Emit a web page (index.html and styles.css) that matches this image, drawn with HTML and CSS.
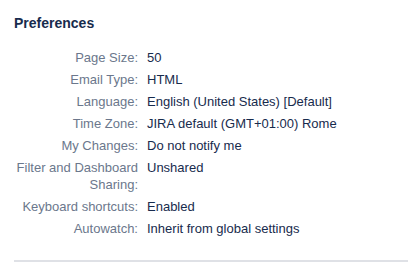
FILE: index.html
```html
<!DOCTYPE html>
<html lang="en">
<head>
    <meta charset="UTF-8">
    <meta name="viewport" content="width=device-width, initial-scale=1.0">
    <title>Preferences</title>
    <link rel="stylesheet" href="styles.css">
</head>
<body>
    <section class="prefs">
        <h2>Preferences</h2>
        <dl class="prefs-list">
            <div class="row"><dt>Page Size:</dt><dd>50</dd></div>
            <div class="row"><dt>Email Type:</dt><dd>HTML</dd></div>
            <div class="row"><dt>Language:</dt><dd>English (United States) [Default]</dd></div>
            <div class="row"><dt>Time Zone:</dt><dd>JIRA default (GMT+01:00) Rome</dd></div>
            <div class="row"><dt>My Changes:</dt><dd>Do not notify me</dd></div>
            <div class="row"><dt>Filter and Dashboard Sharing:</dt><dd>Unshared</dd></div>
            <div class="row"><dt>Keyboard shortcuts:</dt><dd>Enabled</dd></div>
            <div class="row"><dt>Autowatch:</dt><dd>Inherit from global settings</dd></div>
        </dl>
        <hr class="divider">
    </section>
</body>
</html>
```

FILE: styles.css
```css
body {
    font-family: 'Liberation Sans', Arial, sans-serif;
    background-color: #fff;
    color: #172b4d;
    margin: 0;
    padding: 0;
}
.prefs {
    padding: 13px 0 0 14px;
}
.prefs h2 {
    font-size: 14px;
    font-weight: bold;
    margin: 0 0 16px 0;
    line-height: 20px;
}
.prefs-list {
    margin: 0;
}
.row {
    display: grid;
    grid-template-columns: 124px 1fr;
    column-gap: 9px;
    font-size: 13px;
    line-height: 17px;
    margin-bottom: 5px;
}
.row dt {
    color: #6b778c;
    text-align: right;
}
.row dd {
    margin: 0;
}
.divider {
    border: none;
    border-top: 2px solid #dfe1e6;
    margin: 23px 0 0 0;
}
```
